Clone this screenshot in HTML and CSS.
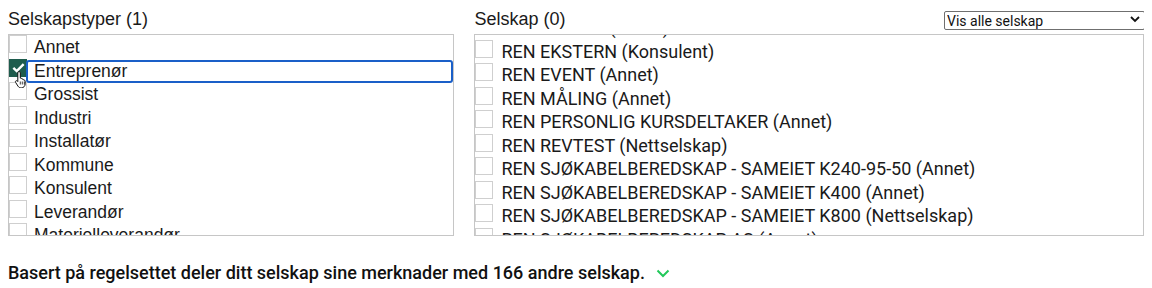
FILE: index.html
```html
<!DOCTYPE html>
<html lang="no">
<head>
    <meta charset="UTF-8">
    <title>Deling av merknader</title>
    <link rel="stylesheet" href="styles.css">
</head>
<body>
    <div class="panels">
        <div class="panel">
            <div class="panel-head">
                <span class="panel-title">Selskapstyper (1)</span>
            </div>
            <div class="list-box type-list">
                <div class="row"><span class="box"></span><span class="label">Annet</span></div>
                <div class="row focused"><span class="box checked"><svg viewBox="0 0 16 16" width="15" height="15"><path d="M2.5 8.5l3.6 3.4L13.5 4.5" fill="none" stroke="#fff" stroke-width="2.6"/></svg></span><span class="label">Entreprenør</span>
                    <svg class="hand" viewBox="0 0 14 18" width="14" height="18"><path d="M5 1.5c.8 0 1.3.6 1.3 1.3v5.4l.4-.1c.7 0 1.2.4 1.3 1l.3-.1c.7 0 1.2.4 1.3 1l.3-.1c.8 0 1.3.6 1.3 1.3v2.6c0 2.2-1.6 4.1-3.9 4.1H7.2c-1.4 0-2.4-.6-3.2-1.7L1.6 12.4c-.4-.6-.2-1.3.4-1.6.5-.3 1.1-.1 1.5.3l.3.4V2.8c0-.7.5-1.3 1.2-1.3z" fill="#fff" stroke="#111" stroke-width="1"/><path d="M6.3 11.5v3M8.3 11.5v3M10.3 11.5v3" stroke="#111" stroke-width=".8"/></svg>
                </div>
                <div class="row"><span class="box"></span><span class="label">Grossist</span></div>
                <div class="row"><span class="box"></span><span class="label">Industri</span></div>
                <div class="row"><span class="box"></span><span class="label">Installatør</span></div>
                <div class="row"><span class="box"></span><span class="label">Kommune</span></div>
                <div class="row"><span class="box"></span><span class="label">Konsulent</span></div>
                <div class="row"><span class="box"></span><span class="label">Leverandør</span></div>
                <div class="row"><span class="box"></span><span class="label">Materielleverandør</span></div>
                <div class="row"><span class="box"></span><span class="label">Nettselskap</span></div>
            </div>
        </div>
        <div class="panel">
            <div class="panel-head">
                <span class="panel-title">Selskap (0)</span>
                <div class="select-wrap">
                    <select class="filter">
                        <option>Vis alle selskap</option>
                        <option>Vis valgte selskap</option>
                    </select>
                    <svg class="chevron" viewBox="0 0 10 7" width="10" height="7"><path d="M1 1l4 4 4-4" fill="none" stroke="#111" stroke-width="1.8"/></svg>
                </div>
            </div>
            <div class="list-box company-list" id="companies">
                <div class="row"><span class="box"></span><span class="label">REN DIGITAL (Annet)</span></div>
                <div class="row"><span class="box"></span><span class="label">REN EKSTERN (Konsulent)</span></div>
                <div class="row"><span class="box"></span><span class="label">REN EVENT (Annet)</span></div>
                <div class="row"><span class="box"></span><span class="label">REN MÅLING (Annet)</span></div>
                <div class="row"><span class="box"></span><span class="label">REN PERSONLIG KURSDELTAKER (Annet)</span></div>
                <div class="row"><span class="box"></span><span class="label">REN REVTEST (Nettselskap)</span></div>
                <div class="row"><span class="box"></span><span class="label">REN SJØKABELBEREDSKAP - SAMEIET K240-95-50 (Annet)</span></div>
                <div class="row"><span class="box"></span><span class="label">REN SJØKABELBEREDSKAP - SAMEIET K400 (Annet)</span></div>
                <div class="row"><span class="box"></span><span class="label">REN SJØKABELBEREDSKAP - SAMEIET K800 (Nettselskap)</span></div>
                <div class="row"><span class="box"></span><span class="label">REN SJØKABELBEREDSKAP AS (Annet)</span></div>
                <div class="row"><span class="box"></span><span class="label">REN TEST (Annet)</span></div>
            </div>
        </div>
    </div>
    <p class="summary">Basert på regelsettet deler ditt selskap sine merknader med 166 andre selskap.
        <svg class="expand" viewBox="0 0 14 9" width="14" height="9"><path d="M1.5 1.5l5.5 5.5 5.5-5.5" fill="none" stroke="#22c85a" stroke-width="2"/></svg>
    </p>
    <script>
        document.getElementById('companies').scrollTop = 19;
    </script>
</body>
</html>
```

FILE: styles.css
```css
body {
    margin: 8px;
    font-family: 'Liberation Sans', Arial, sans-serif;
    font-size: 18px;
    color: #1a1a1a;
    background: #fff;
}
.panels {
    display: grid;
    grid-template-columns: 2fr 3fr;
    column-gap: 20px;
}
.panel-head {
    display: flex;
    justify-content: space-between;
    align-items: center;
    height: 22px;
    margin-bottom: 4px;
}
.panel-title {
    line-height: 22px;
}
.select-wrap {
    position: relative;
    width: 201px;
    height: 19px;
    margin-right: -1px;
}
.filter {
    appearance: none;
    -webkit-appearance: none;
    width: 100%;
    height: 19px;
    margin: 0;
    padding: 0 0 0 2px;
    font-family: Roboto, sans-serif;
    font-size: 14px;
    color: #111;
    background: #fff;
    border: 1px solid #6f6f6f;
    border-radius: 2px;
}
.chevron {
    position: absolute;
    right: 5px;
    top: 6px;
    pointer-events: none;
}
.list-box {
    height: 200px;
    overflow: hidden;
    border: 1px solid #c6c6c6;
}
.row {
    position: relative;
    display: flex;
    align-items: flex-start;
    height: 23.5px;
    box-sizing: border-box;
}
.box {
    flex: none;
    display: flex;
    align-items: center;
    justify-content: center;
    width: 16px;
    height: 16px;
    border: 1px solid #cfcfcf;
    background: #fff;
}
.box.checked {
    background: #1e5c4d;
    border-color: #1e5c4d;
}
.label {
    margin-left: 7px;
    line-height: 23px;
    white-space: nowrap;
}
.type-list .label {
    font-size: 17.5px;
    padding-top: 1px;
}
.focused::after {
    content: '';
    position: absolute;
    left: 17px;
    right: 0;
    top: 1px;
    bottom: -1px;
    border: 2px solid #1a5fc8;
    border-radius: 3px;
}
.hand {
    position: absolute;
    left: 5px;
    top: 11px;
    z-index: 2;
}
.company-list {
    font-family: Roboto, sans-serif;
}
.company-list .label {
    margin-left: 8px;
}
.summary {
    display: flex;
    align-items: center;
    gap: 11px;
    margin: 27px 0 0;
    font-family: Roboto, sans-serif;
    font-weight: 500;
    font-size: 18px;
    line-height: 20px;
    color: #111;
}
.expand {
    margin-top: 1px;
}
```
